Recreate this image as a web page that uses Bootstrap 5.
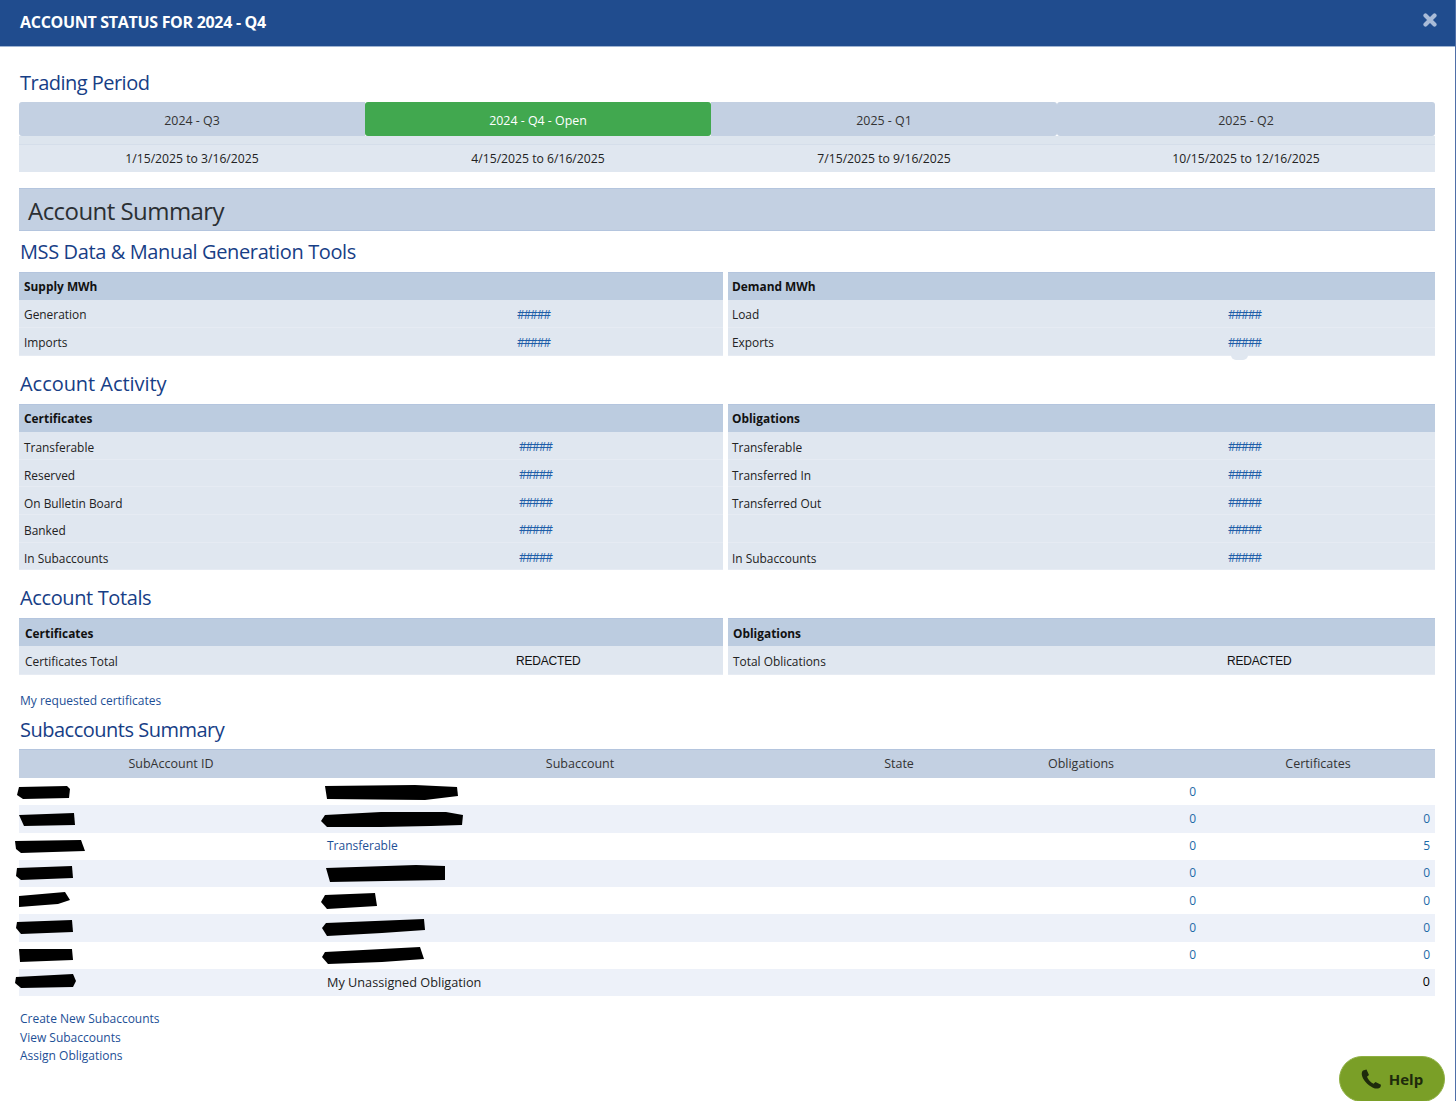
<!DOCTYPE html>
<html lang="en"><head><meta charset="utf-8"><title>Account Status</title>
<link rel="stylesheet" href="https://cdn.jsdelivr.net/npm/bootstrap@5.3.0/dist/css/bootstrap.min.css">
<script src="https://cdn.jsdelivr.net/npm/bootstrap@5.3.0/dist/js/bootstrap.bundle.min.js"></script>
<style>
html,body{height:1101px;overflow:hidden}
body{font-family:"Open Sans","Noto Sans",sans-serif;font-size:12px;color:#222;background:#fff;position:relative;border-right:1px solid #4f6fa8}
a{color:#1d4f96;text-decoration:none}
.top-bar{height:47px;background:#204c8e;border-bottom:1px solid #9fb4d2;color:#fff;padding:0 20px 3px}
.top-title{font-size:16px;font-weight:700;letter-spacing:-.3px}
.close-x{position:absolute;left:1423px;top:13px;width:14px;height:14px}
.page-body{padding:22px 20px 0 19px}
.sec-h{font-size:20px;line-height:28px;height:28px;color:#173e86;margin:0 0 6px 1px;font-weight:400;letter-spacing:-.38px}
.sec-first{margin-bottom:5px;letter-spacing:-.52px}
.sec-wide{letter-spacing:-.05px}
.tab-grid{display:grid;grid-template-columns:346px 346px 346px 1fr;text-align:center;margin-bottom:16px}
.tab-cell{height:34px;background:#c3d0e2;color:#333;font-size:12.4px;line-height:38px}
.tab-first{border-radius:3px 0 0 3px}.tab-last{border-radius:3px}.tab-third{border-radius:0 3px 3px 0}
.tab-on{background:#41a84f;color:#fff;border-radius:3px}
.date-cell{height:36px;background:#e0e7f0;border-top:8px solid #dde5ee;box-shadow:inset 0 1px 0 #d5deea;line-height:29px;color:#222;font-size:12.2px}
.sum-bar{height:43px;background:#c3d0e2;border-top:1px solid #b4c5de;border-bottom:1px solid #b4c5de;font-size:24px;line-height:43px;padding-left:9px;color:#2b2f33;margin-bottom:7px;letter-spacing:-.55px}
.pair{display:flex;gap:5px}
.pair>.left-t{width:704px;flex:none}.pair>.right-t{width:707px;flex:none}
.data-t{margin:0;width:100%;table-layout:fixed;border-collapse:collapse;--bs-table-bg:#e0e7f0;--bs-table-color:#222}
.data-t th,.data-t td{padding:0 5px;border:0;vertical-align:middle;font-size:11.9px;font-weight:400}
.data-t thead th{background:#bccce0;height:27px;font-weight:700;color:#111;border-top:1px solid #b4c5de;padding-top:2px}
.data-t tbody td{background:#e0e7f0;height:28px;border-bottom:1px solid #e6ebf3;padding-top:3px}
.tall tbody td{height:27.7px;padding-top:6px}
.tall tbody td:last-child{padding-top:4px}
.totals tbody td{height:29px}
.right-t .data-t th:first-child,.right-t .data-t td:first-child{padding-left:4px}
.totals .data-t th:first-child,.totals .data-t td:first-child{padding-left:6px}
.totals .right-t .data-t th:first-child,.totals .right-t .data-t td:first-child{padding-left:5px}
.hash{color:#1d5da8;font-size:12px;letter-spacing:-1.2px}
.lbl-col{width:493px}.lbl-col-b{width:495px}
.lbl-col-c{width:492px}.lbl-col-d{width:494px}
.data-t td.red-v{font-family:"Liberation Sans",sans-serif;color:#111;font-size:12px;letter-spacing:-.2px;padding-top:1px}
.gap-a{margin-top:14px}
.gap-b{margin-top:16px}
.plain-link{font-size:12px;line-height:20px;height:20px;display:block;margin-left:1px}
.sub-h{margin-top:5px;margin-bottom:5px;letter-spacing:-.5px}
.sub-t{margin:0;width:1416px;table-layout:fixed;border-collapse:collapse}
.sub-t th,.sub-t td{padding:0 5px;border:0;font-size:12px;vertical-align:middle;color:#222;font-weight:400;height:27.3px;position:relative}
.sub-t thead th{background:#c3d0e2;text-align:center;height:28px;color:#333;border-top:1px solid #b4c5de;font-size:12.5px}
.sub-t tbody tr:nth-child(even) td{background:#edf1f9}
.sub-t a{color:#1d4f96}
.sub-t td:nth-child(2){padding-left:4px}
.num{text-align:right}
.num a{color:#1d6aa8}
.sub-t td.wide-txt{font-size:12.7px}
.sub-t td.dark-num{color:#000;font-size:12.5px}
.scrib{position:absolute;display:block;fill:#000;overflow:visible}
.foot-links{margin-top:14px}
.foot-links a{display:block;font-size:12px;line-height:18.5px;margin-left:1px}
.help-btn{position:absolute;left:1339px;top:1056px;width:106px;height:46px;border-radius:23px;background:#7a9f27;border:1px solid #8fb043;color:#1e2a0c;font-weight:700;font-size:15px;padding:0 0 0 -1px;gap:7px}
.bump{position:absolute;left:1231px;top:355px;width:17px;height:5px;background:#e0e7f0;border-radius:0 0 9px 9px}
.smudge{position:absolute;left:835px;top:858px;width:30px;height:2px;background:#fff;border-radius:0 0 50% 50%}
</style></head><body>
<div class="top-bar d-flex align-items-center"><span class="top-title">ACCOUNT STATUS FOR 2024 - Q4</span></div>
<svg class="close-x" viewBox="0 0 14 14"><path d="M2.5 2.5 L11.5 11.5 M11.5 2.5 L2.5 11.5" stroke="#a9bbd8" stroke-width="4.2" stroke-linecap="round" fill="none"/></svg>
<main class="page-body">
<h2 class="sec-h sec-first">Trading Period</h2>
<div class="tab-grid">
<div class="tab-cell tab-first">2024 - Q3</div><div class="tab-cell tab-on">2024 - Q4 - Open</div><div class="tab-cell tab-third">2025 - Q1</div><div class="tab-cell tab-last">2025 - Q2</div>
<div class="date-cell">1/15/2025 to 3/16/2025</div><div class="date-cell">4/15/2025 to 6/16/2025</div><div class="date-cell">7/15/2025 to 9/16/2025</div><div class="date-cell">10/15/2025 to 12/16/2025</div>
</div>
<div class="sum-bar">Account Summary</div>
<h3 class="sec-h">MSS Data &amp; Manual Generation Tools</h3>
<div class="pair">
<div class="left-t"><table class="table data-t"><colgroup><col class="lbl-col"><col></colgroup><thead><tr><th colspan="2">Supply MWh</th></tr></thead><tbody><tr><td>Generation</td><td><a class="hash" href="#">#####</a></td></tr><tr><td>Imports</td><td><a class="hash" href="#">#####</a></td></tr></tbody></table></div>
<div class="right-t"><table class="table data-t"><colgroup><col class="lbl-col-b"><col></colgroup><thead><tr><th colspan="2">Demand MWh</th></tr></thead><tbody><tr><td>Load</td><td><a class="hash" href="#">#####</a></td></tr><tr><td>Exports</td><td><a class="hash" href="#">#####</a></td></tr></tbody></table></div>
</div>
<h3 class="sec-h gap-a sec-wide">Account Activity</h3>
<div class="pair">
<div class="left-t"><table class="table data-t tall"><colgroup><col class="lbl-col-b"><col></colgroup><thead><tr><th colspan="2">Certificates</th></tr></thead><tbody>
<tr><td>Transferable</td><td><a class="hash" href="#">#####</a></td></tr><tr><td>Reserved</td><td><a class="hash" href="#">#####</a></td></tr><tr><td>On Bulletin Board</td><td><a class="hash" href="#">#####</a></td></tr><tr><td>Banked</td><td><a class="hash" href="#">#####</a></td></tr><tr><td>In Subaccounts</td><td><a class="hash" href="#">#####</a></td></tr></tbody></table></div>
<div class="right-t"><table class="table data-t tall"><colgroup><col class="lbl-col-b"><col></colgroup><thead><tr><th colspan="2">Obligations</th></tr></thead><tbody>
<tr><td>Transferable</td><td><a class="hash" href="#">#####</a></td></tr><tr><td>Transferred In</td><td><a class="hash" href="#">#####</a></td></tr><tr><td>Transferred Out</td><td><a class="hash" href="#">#####</a></td></tr><tr><td></td><td><a class="hash" href="#">#####</a></td></tr><tr><td>In Subaccounts</td><td><a class="hash" href="#">#####</a></td></tr></tbody></table></div>
</div>
<h3 class="sec-h gap-a">Account Totals</h3>
<div class="pair totals">
<div class="left-t"><table class="table data-t"><colgroup><col class="lbl-col-c"><col></colgroup><thead><tr><th colspan="2">Certificates</th></tr></thead><tbody><tr><td>Certificates Total</td><td class="red-v">REDACTED</td></tr></tbody></table></div>
<div class="right-t"><table class="table data-t"><colgroup><col class="lbl-col-d"><col></colgroup><thead><tr><th colspan="2">Obligations</th></tr></thead><tbody><tr><td>Total Oblications</td><td class="red-v">REDACTED</td></tr></tbody></table></div>
</div>
<a class="plain-link gap-b" href="#">My requested certificates</a>
<h3 class="sec-h sub-h">Subaccounts Summary</h3>
<table class="sub-t">
<colgroup><col style="width:304px"><col style="width:514px"><col style="width:124px"><col style="width:240px"><col></colgroup>
<thead><tr><th>SubAccount ID</th><th>Subaccount</th><th>State</th><th>Obligations</th><th>Certificates</th></tr></thead>
<tbody>
<tr><td><svg class="scrib" style="left:-2px;top:6px" width="54" height="16"><path d="M2 3 L50 2 L53 5 L52 14 L6 15 L0 11Z"/></svg></td><td><svg class="scrib" style="left:2px;top:6px" width="134" height="17"><path d="M0 2 L90 1 L132 3 L133 12 L100 16 L2 15Z"/></svg></td><td></td><td class="num"><a href="#">0</a></td><td></td></tr>
<tr><td><svg class="scrib" style="left:0;top:7px" width="56" height="15"><path d="M0 3 L55 1 L56 13 L5 14Z"/></svg></td><td><svg class="scrib" style="left:-2px;top:6px" width="143" height="18"><path d="M4 4 L60 1 L125 1 L142 4 L141 14 L110 15 L60 16 L6 16 L0 10Z"/></svg></td><td></td><td class="num"><a href="#">0</a></td><td class="num"><a href="#">0</a></td></tr>
<tr><td><svg class="scrib" style="left:-4px;top:6px" width="70" height="15"><path d="M0 2 L66 1 L70 12 L6 14 L1 10Z"/></svg></td><td><a href="#">Transferable</a></td><td></td><td class="num"><a href="#">0</a></td><td class="num"><a href="#">5</a></td></tr>
<tr><td><svg class="scrib" style="left:-3px;top:5px" width="58" height="16"><path d="M1 3 L56 1 L57 13 L5 15 L0 11Z"/></svg></td><td><svg class="scrib" style="left:3px;top:4px" width="120" height="19"><path d="M0 4 L90 1 L119 2 L119 16 L60 17 L4 18Z"/></svg></td><td></td><td class="num"><a href="#">0</a></td><td class="num"><a href="#">0</a></td></tr>
<tr><td><svg class="scrib" style="left:-1px;top:4px" width="52" height="17"><path d="M1 5 L47 1 L52 9 L40 13 L1 16Z"/></svg></td><td><svg class="scrib" style="left:-2px;top:5px" width="57" height="18"><path d="M4 3 L54 1 L56 14 L6 17 L0 10Z"/></svg></td><td></td><td class="num"><a href="#">0</a></td><td class="num"><a href="#">0</a></td></tr>
<tr><td><svg class="scrib" style="left:-3px;top:5px" width="58" height="16"><path d="M1 3 L56 1 L57 13 L5 15 L0 9Z"/></svg></td><td><svg class="scrib" style="left:-1px;top:4px" width="104" height="20"><path d="M4 5 L102 1 L103 12 L60 15 L5 18 L0 10Z"/></svg></td><td></td><td class="num"><a href="#">0</a></td><td class="num"><a href="#">0</a></td></tr>
<tr><td><svg class="scrib" style="left:-1px;top:6px" width="56" height="15"><path d="M1 1 L54 1 L55 12 L2 14Z"/></svg></td><td><svg class="scrib" style="left:-1px;top:4px" width="102" height="20"><path d="M3 6 L98 1 L102 13 L60 16 L6 18 L0 11Z"/></svg></td><td></td><td class="num"><a href="#">0</a></td><td class="num"><a href="#">0</a></td></tr>
<tr><td><svg class="scrib" style="left:-4px;top:4px" width="62" height="16"><path d="M1 4 L58 1 L61 8 L58 14 L6 15 L0 10Z"/></svg></td><td class="wide-txt">My Unassigned Obligation</td><td></td><td></td><td class="num dark-num">0</td></tr>
</tbody></table>
<div class="foot-links"><a href="#">Create New Subaccounts</a><a href="#">View Subaccounts</a><a href="#">Assign Obligations</a></div>
</main>
<div class="bump"></div><div class="smudge"></div>
<button class="btn help-btn d-flex align-items-center justify-content-center" type="button"><svg width="21" height="20" viewBox="0 0 21 20"><path d="M2 1.5 L5.5 .5 L8 6 L6 7.8 C7 10.5 9.5 13.5 12.5 14.8 L14.5 13 L20 15.8 L19.5 18 C18 19.8 15 20 12 18.7 C6.5 16.2 1.5 10.5 .8 5.8 C.6 4 1 2.5 2 1.5Z" fill="#1e2a0c"/></svg><span>Help</span></button>
</body></html>
